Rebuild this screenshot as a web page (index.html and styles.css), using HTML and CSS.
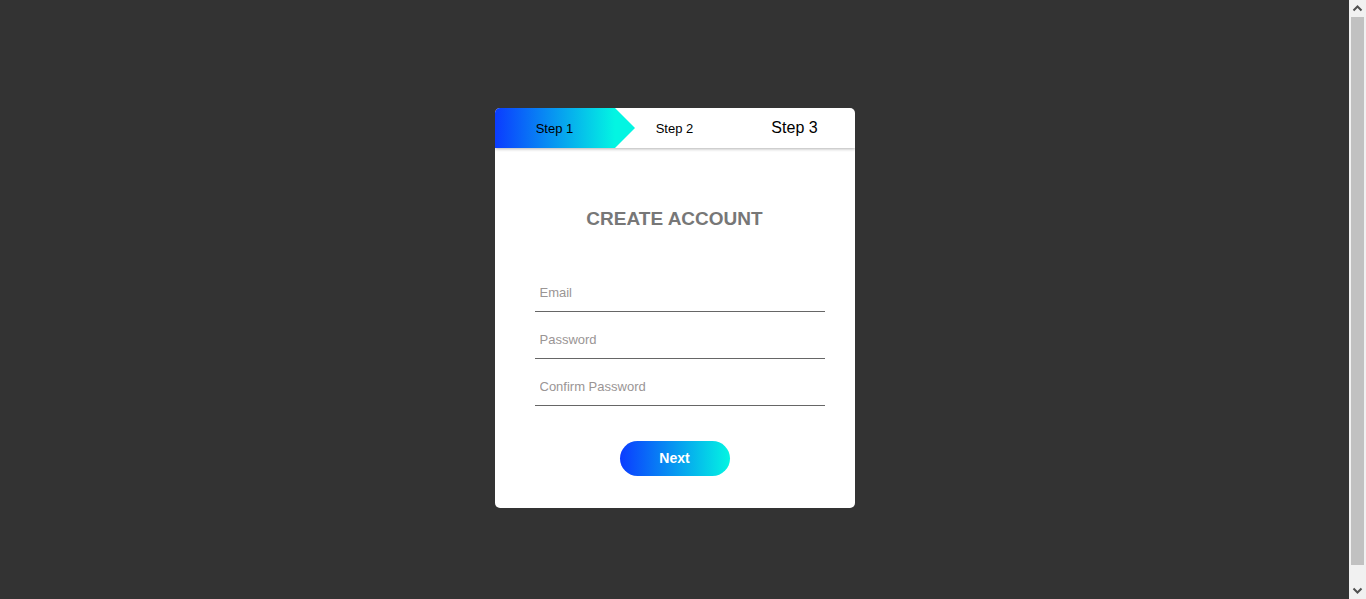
FILE: index.html
```html
<!DOCTYPE html>
<html lang="en">
<head>
<meta charset="utf-8">
<title>Create Account</title>
<link rel="stylesheet" href="styles.css">
</head>
<body>
  <div class="card">
    <div class="steps">
      <div class="step step-active">Step 1</div>
      <div class="step">Step 2</div>
      <div class="step step-big">Step 3</div>
    </div>
    <form class="form">
      <h2 class="title">CREATE ACCOUNT</h2>
      <input class="field" type="email" placeholder="Email">
      <input class="field" type="password" placeholder="Password">
      <input class="field" type="password" placeholder="Confirm Password">
      <div class="actions">
        <button class="next" type="button">Next</button>
      </div>
    </form>
  </div>
  <div class="scrollbar" aria-hidden="true">
    <svg class="sb-arrow" width="17" height="17" viewBox="0 0 17 17"><path d="M4.5 10.5 L8.5 6.5 L12.5 10.5" fill="none" stroke="#505050" stroke-width="2"/></svg>
    <div class="sb-track"><div class="sb-thumb"></div></div>
    <svg class="sb-arrow" width="17" height="17" viewBox="0 0 17 17"><path d="M4.5 6.5 L8.5 10.5 L12.5 6.5" fill="none" stroke="#505050" stroke-width="2"/></svg>
  </div>
</body>
</html>
```

FILE: styles.css
```css
html {
  background: #333333;
}
body {
  margin: 8px 25px 8px 8px;
  height: 100vh;
  display: flex;
  align-items: center;
  justify-content: center;
  font-family: "Liberation Sans", Arial, sans-serif;
}
.card {
  width: 360px;
  height: 400px;
  background: #ffffff;
  border-radius: 5px;
  overflow: hidden;
}
.steps {
  display: flex;
  height: 40px;
  box-shadow: 0 1px 3px rgba(0, 0, 0, 0.3);
  position: relative;
}
.step {
  flex: 1;
  display: flex;
  align-items: center;
  justify-content: center;
  font-size: 13px;
  color: #000;
  position: relative;
  padding-top: 1px;
}
.step-active {
  background: linear-gradient(to right, #0b3cff, #03f5e2);
}
.step-active::after {
  content: "";
  position: absolute;
  right: -20px;
  top: 0;
  border-left: 20px solid #03f5e2;
  border-top: 20px solid transparent;
  border-bottom: 20px solid transparent;
}
.step-big {
  font-size: 16px;
  padding-top: 0;
}
.form {
  display: flex;
  flex-direction: column;
  padding: 60px 30px 0 40px;
}
.title {
  margin: 0 0 35px -10px;
  text-align: center;
  font-size: 19px;
  font-weight: bold;
  color: #777777;
}
.field {
  display: block;
  width: 290px;
  box-sizing: border-box;
  height: 47px;
  border: none;
  border-bottom: 1px solid #666666;
  padding: 10px 5px 0;
  font-family: "Liberation Sans", Arial, sans-serif;
  font-size: 13px;
  outline: none;
  background: transparent;
}
.field::placeholder {
  color: #9a9595;
}
.actions {
  display: flex;
  justify-content: center;
  margin-left: -10px;
  padding-top: 35px;
}
.next {
  width: 110px;
  height: 35px;
  border: none;
  border-radius: 18px;
  background: linear-gradient(to right, #0b3cff, #03f5e2);
  color: #ffffff;
  font-family: "Liberation Sans", Arial, sans-serif;
  font-size: 14px;
  font-weight: bold;
}
.scrollbar {
  position: fixed;
  top: 0;
  right: 0;
  width: 17px;
  height: 100vh;
  background: #f1f1f1;
  display: flex;
  flex-direction: column;
}
.sb-arrow {
  display: block;
  flex: none;
}
.sb-track {
  flex: 1;
  padding: 0 2px 0 2px;
}
.sb-thumb {
  height: 548px;
  background: #c1c1c1;
}
```
